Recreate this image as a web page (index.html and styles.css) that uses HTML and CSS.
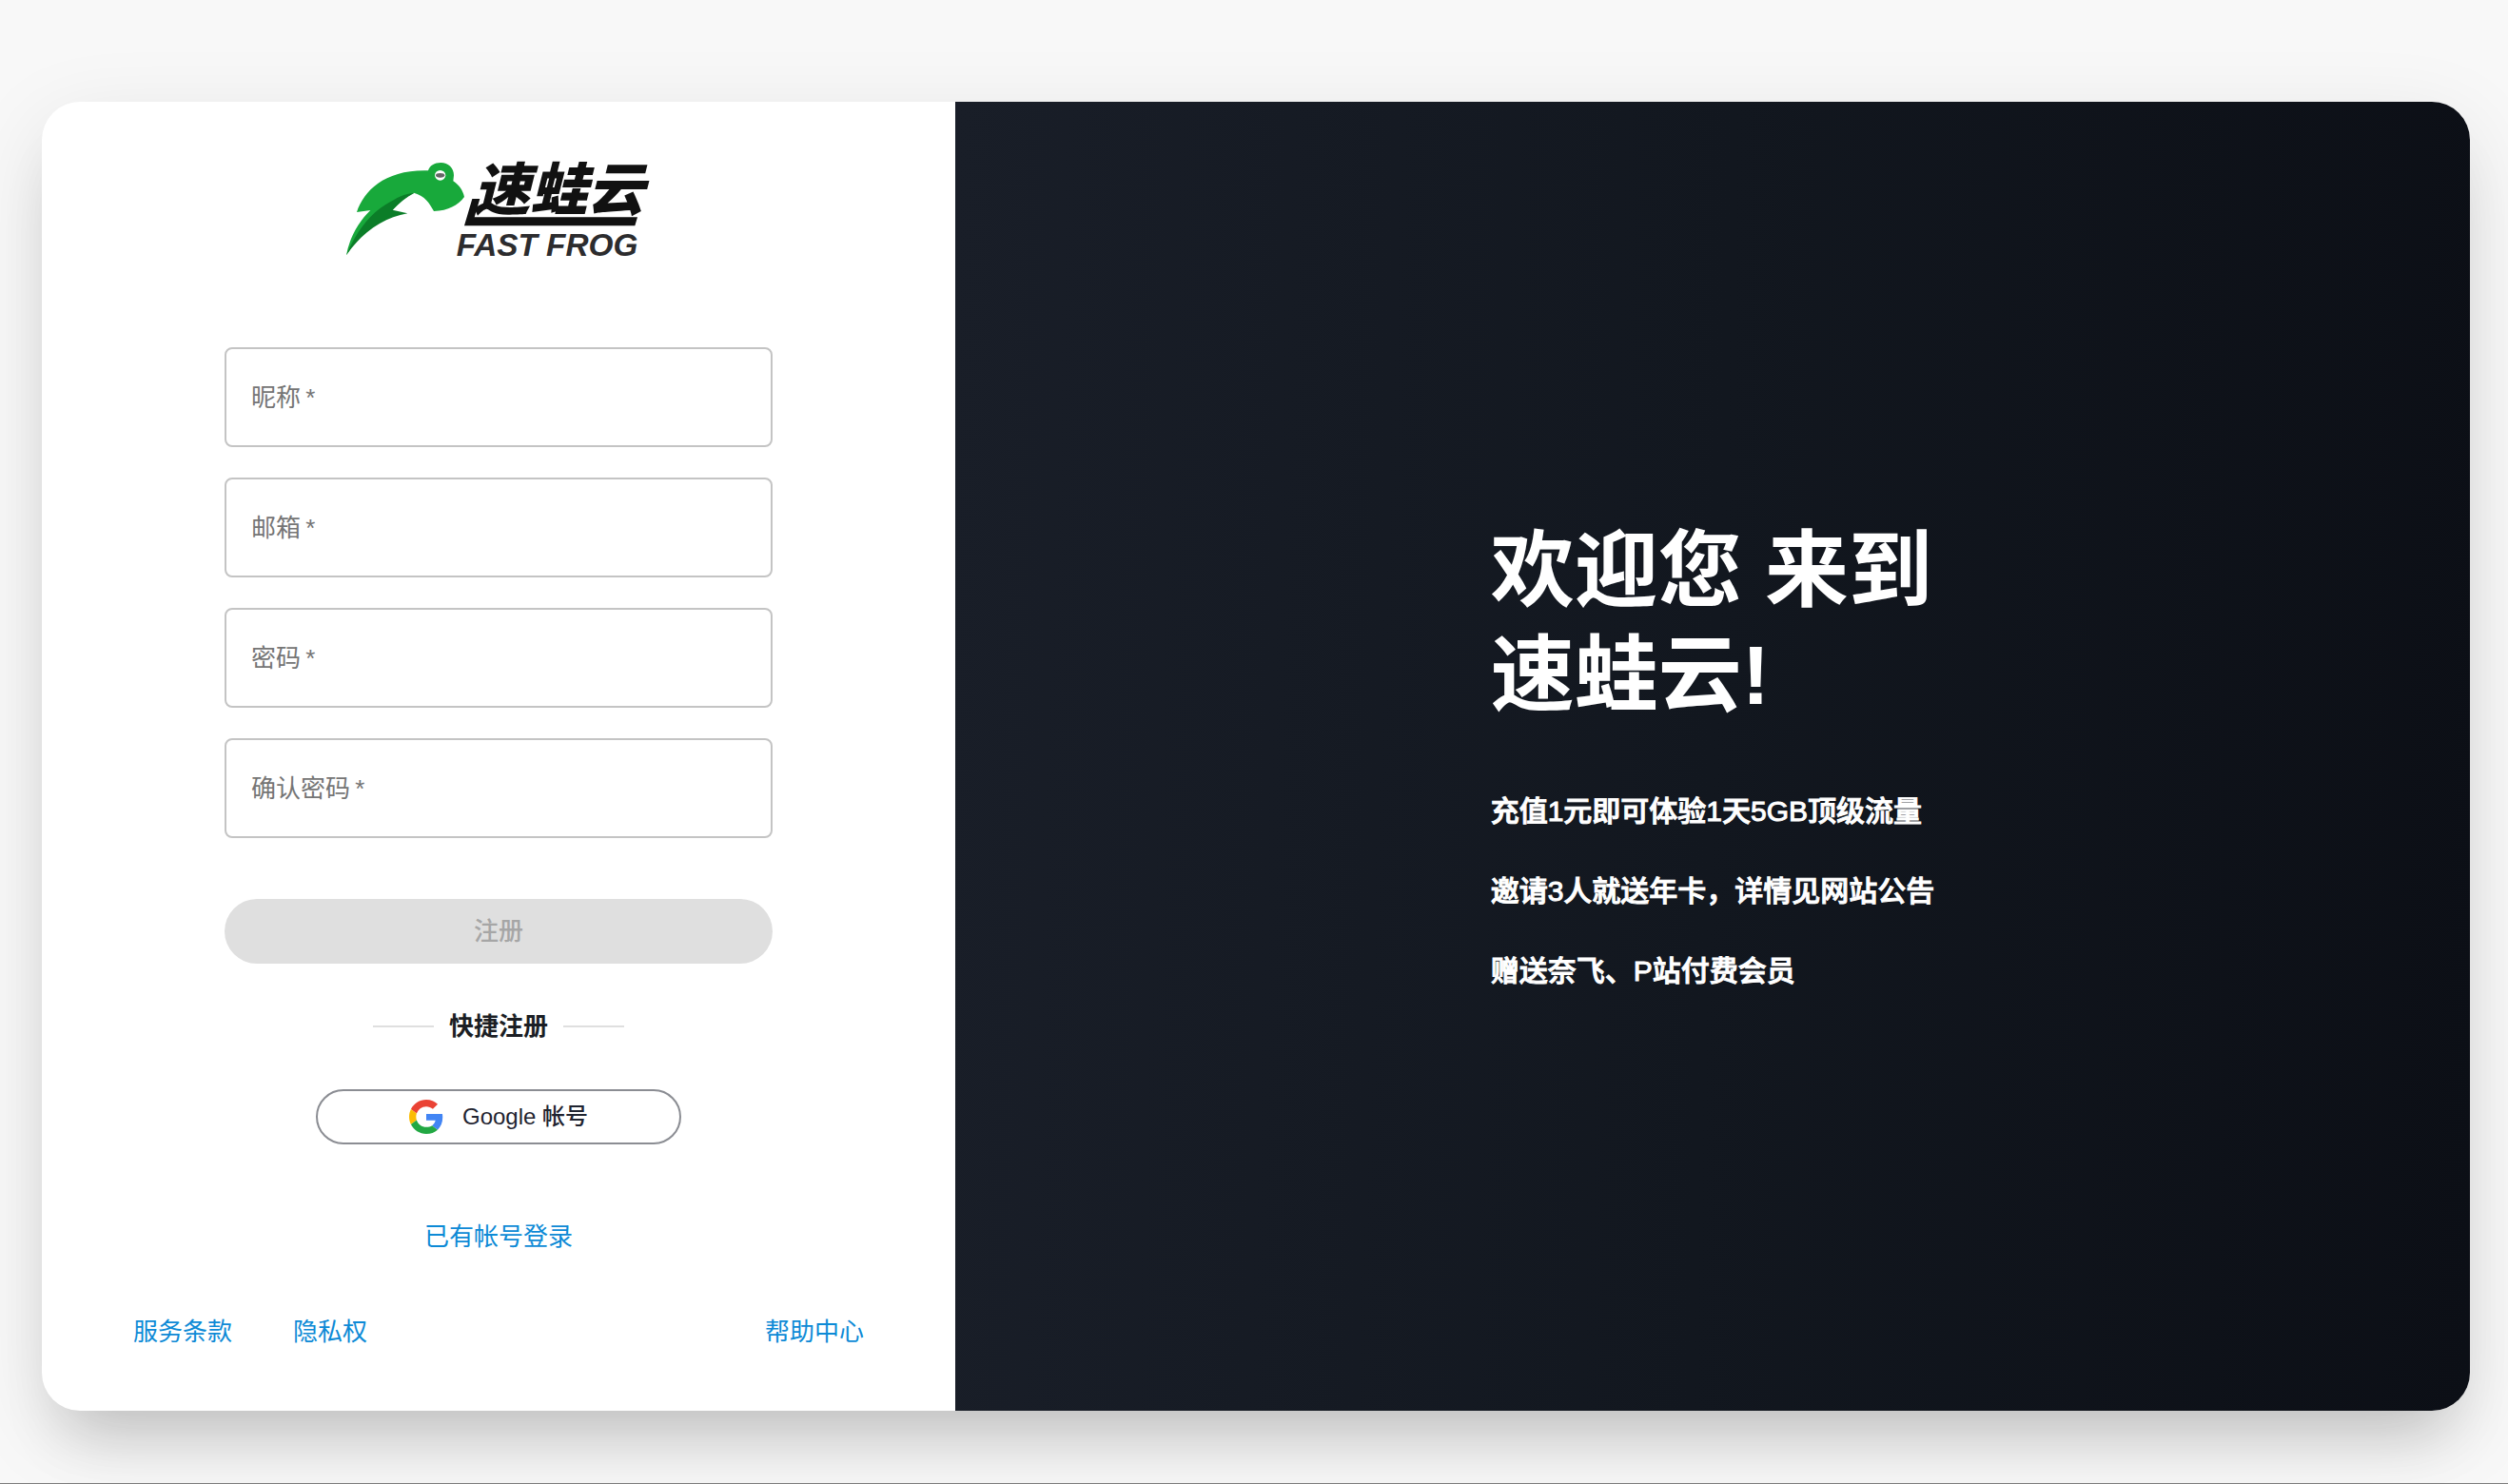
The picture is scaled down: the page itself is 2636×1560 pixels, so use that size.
FILE: index.html
```html
<!DOCTYPE html>
<html lang="zh-CN">
<head>
<meta charset="utf-8">
<meta name="viewport" content="width=device-width, initial-scale=1">
<title>注册 - 速蛙云</title>
<link rel="stylesheet" href="styles.css">
</head>
<body>
<main class="card">
  <section class="signup">
    <svg class="logo" viewBox="42 63 960 300" role="img" aria-label="速蛙云 FAST FROG">
      <path class="logo-body" d="M75 219C98 150 165 84 300 88C305 72 320 63 340 63C364 63 381 80 381 103L379 121C396 132 410 150 414 171C394 198 364 214 318 216C304 190 290 168 255 158C230 170 208 190 188 212L150 240C100 270 70 310 42 355C52 300 80 250 118 213Z"/>
      <path class="logo-shade" d="M42 355C68 292 108 232 165 196C200 174 226 160 257 158C230 172 208 190 188 212L235 223C160 236 92 282 42 355Z"/>
      <ellipse cx="338" cy="103" rx="17" ry="16" fill="#fff"/>
      <ellipse cx="338" cy="103" rx="14" ry="7" fill="#666"/>
      <text class="logo-name" x="442" y="213">速蛙云</text>
      <path class="logo-bar" d="M439 177L463 177L446 235L960 235L952 262L414 262Z"/>
      <text class="logo-latin" x="389" y="356">FAST FROG</text>
    </svg>
    <form class="form">
      <label class="field"><input type="text" required><span class="field-label">昵称&thinsp;*</span></label>
      <label class="field"><input type="email" required><span class="field-label">邮箱&thinsp;*</span></label>
      <label class="field"><input type="password" required><span class="field-label">密码&thinsp;*</span></label>
      <label class="field"><input type="password" required><span class="field-label">确认密码&thinsp;*</span></label>
      <button class="submit" type="submit" disabled>注册</button>
    </form>
    <h2 class="divider">快捷注册</h2>
    <button class="google" type="button">
      <svg class="google-icon" viewBox="0 0 48 48" aria-hidden="true">
        <path fill="#ea4335" d="M24 9.5c3.54 0 6.71 1.22 9.21 3.6l6.85-6.85C35.9 2.38 30.47 0 24 0 14.62 0 6.51 5.38 2.56 13.22l7.98 6.19C12.43 13.72 17.74 9.5 24 9.5z"/>
        <path fill="#4285f4" d="M46.98 24.55c0-1.57-.15-3.09-.38-4.55H24v9.02h12.94c-.58 2.96-2.26 5.48-4.78 7.18l7.73 6c4.51-4.18 7.09-10.36 7.09-17.65z"/>
        <path fill="#fbbc05" d="M10.53 28.59c-.48-1.45-.76-2.99-.76-4.59s.27-3.14.76-4.59l-7.98-6.19C.92 16.46 0 20.12 0 24c0 3.88.92 7.54 2.56 10.78l7.97-6.19z"/>
        <path fill="#22a843" d="M24 48c6.48 0 11.93-2.13 15.89-5.81l-7.73-6c-2.15 1.45-4.92 2.3-8.16 2.3-6.26 0-11.57-4.22-13.47-9.91l-7.98 6.19C6.51 42.62 14.62 48 24 48z"/>
      </svg>
      Google 帐号
    </button>
    <a class="login" href="#login">已有帐号登录</a>
    <footer class="links">
      <a href="#terms">服务条款</a>
      <a href="#privacy">隐私权</a>
      <a class="help" href="#help">帮助中心</a>
    </footer>
  </section>
  <section class="welcome">
    <div class="welcome-text">
      <h1>欢迎您 来到<br>速蛙云!</h1>
      <p>充值1元即可体验1天5GB顶级流量</p>
      <p>邀请3人就送年卡，详情见网站公告</p>
      <p>赠送奈飞、P站付费会员</p>
    </div>
  </section>
</main>
</body>
</html>
```

FILE: styles.css
```css
* {
  box-sizing: border-box;
}

body {
  margin: 0;
  min-height: 100vh;
  padding: 107px 40px 76px 44px;
  border-bottom: 1px solid #7c7c7c;
  background: #f8f8f8;
  color: #1b1e24;
  font: 26px/40px "Liberation Sans", "Noto Sans CJK SC", sans-serif;
}

a {
  color: #0d8ad6;
  text-decoration: none;
}

.card {
  display: grid;
  grid-template-columns: 120fr 199fr;
  border-radius: 40px;
  background: #fff;
  box-shadow: 0 48px 64px -24px rgba(0, 0, 0, 0.16), 0 24px 88px rgba(0, 0, 0, 0.1);
}

.signup {
  display: flex;
  flex-direction: column;
  align-items: center;
  padding: 64px 10% 63px;
}

.logo {
  width: 320px;
  height: 100px;
  overflow: visible;
}

.logo-body {
  fill: #18a93b;
}

.logo-shade {
  fill: #0b7d28;
}

.logo-name {
  fill: #111;
  font: italic 900 180px "Noto Sans CJK SC", sans-serif;
}

.logo-bar {
  fill: #111;
}

.logo-latin {
  fill: #2c2c2e;
  font: italic bold 100px "Liberation Sans", sans-serif;
}

.form {
  display: flex;
  flex-direction: column;
  gap: 32px;
  width: 75%;
  margin-top: 94px;
}

.field {
  position: relative;
  display: block;
}

.field input {
  display: block;
  width: 100%;
  height: 105px;
  padding: 0 28px;
  border: 2px solid #c4c4c4;
  border-radius: 8px;
  background: transparent;
  font: inherit;
}

.field-label {
  position: absolute;
  inset: 33px 28px auto;
  color: #757575;
  pointer-events: none;
}

.submit {
  height: 68px;
  margin-top: 32px;
  border: 0;
  border-radius: 34px;
  background: #dfdfdf;
  color: #a6a6a6;
  font: inherit;
  font-weight: 500;
}

.divider {
  display: flex;
  align-items: center;
  gap: 16px;
  margin: 48px 0;
  font-size: 26px;
  line-height: 36px;
  font-weight: 700;
}

.divider::before,
.divider::after {
  content: "";
  width: 64px;
  height: 2px;
  background: #dfdfdf;
}

.google {
  display: flex;
  align-items: center;
  justify-content: center;
  gap: 20px;
  width: 50%;
  height: 58px;
  padding: 0;
  border: 2px solid #8b8d93;
  border-radius: 29px;
  background: #fff;
  color: #1f2430;
  font: inherit;
  font-size: 24px;
  font-weight: 500;
}

.google-icon {
  width: 36px;
  height: 36px;
}

.login {
  margin-top: 77px;
}

.links {
  display: flex;
  gap: 64px;
  width: 100%;
  margin-top: 60px;
}

.help {
  margin-left: auto;
}

.welcome {
  display: flex;
  align-items: center;
  justify-content: center;
  border-radius: 0 40px 40px 0;
  background: linear-gradient(92deg, #191e28 0%, #12171f 50%, #0c0f16 100%);
  color: #fff;
}

.welcome h1 {
  margin: 0 0 64px;
  font-size: 88px;
  line-height: 110px;
  font-weight: 700;
}

.welcome p {
  margin: 36px 0 0;
  font-size: 30px;
  line-height: 48px;
  font-weight: 500;
  -webkit-text-stroke: 1px #fff;
}
```
